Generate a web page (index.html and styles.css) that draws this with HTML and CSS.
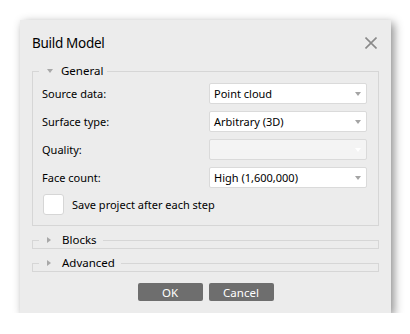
FILE: index.html
```html
<!DOCTYPE html>
<html lang="en">
<head>
    <meta charset="UTF-8">
    <meta name="viewport" content="width=device-width, initial-scale=1.0">
    <title>Build Model</title>
    <link rel="stylesheet" href="styles.css">
</head>
<body>

<div class="dialog">
    <div class="header">
        <h1>Build Model</h1>
        <svg class="close" width="12" height="12" viewBox="0 0 12 12">
            <path d="M0.5 0.5 L11.5 11.5 M11.5 0.5 L0.5 11.5" stroke="#8a8a8a" stroke-width="1.6" fill="none"/>
        </svg>
    </div>

    <fieldset class="group">
        <legend><span class="arrow-down"></span>General</legend>

        <div class="form">
            <label>Source data:</label>
            <div class="combo"><span>Point cloud</span><span class="caret"></span></div>

            <label>Surface type:</label>
            <div class="combo"><span>Arbitrary (3D)</span><span class="caret"></span></div>

            <label>Quality:</label>
            <div class="combo disabled"><span></span><span class="caret"></span></div>

            <label>Face count:</label>
            <div class="combo"><span>High (1,600,000)</span><span class="caret"></span></div>
        </div>

        <div class="check-row">
            <span class="checkbox"></span>
            <span>Save project after each step</span>
        </div>
    </fieldset>

    <fieldset class="group collapsed">
        <legend><span class="arrow-right"></span>Blocks</legend>
    </fieldset>

    <fieldset class="group collapsed">
        <legend><span class="arrow-right"></span>Advanced</legend>
    </fieldset>

    <div class="buttons">
        <button>OK</button>
        <button>Cancel</button>
    </div>
</div>

</body>
</html>
```

FILE: styles.css
```css
* {
    margin: 0;
    padding: 0;
    box-sizing: border-box;
}

body {
    font-family: 'Noto Sans', 'Open Sans', sans-serif;
    font-size: 11px;
    color: #000;
    background-color: #ffffff;
}

.dialog {
    margin: 20px 0 0 20px;
    width: 371px;
    height: 293px;
    background-color: #ececec;
    box-shadow: 3px 3px 9px rgba(0, 0, 0, 0.45);
    padding: 0 12px 0 12px;
}

.header {
    display: flex;
    justify-content: space-between;
    align-items: center;
    height: 43px;
    padding-top: 3px;
    padding-right: 2px;
}

h1 {
    font-size: 13.5px;
    font-weight: normal;
    line-height: 20px;
    letter-spacing: -0.3px;
}

.group {
    border: 1px solid #d6d6d6;
    padding: 4px 11px 10px 9px;
    margin-top: 0;
}

.group legend {
    margin-left: -3px;
    padding: 0 4px 0 8px;
    line-height: 16px;
    font-size: 11.5px;
    display: flex;
    align-items: center;
}

.group.collapsed {
    padding: 0 11px 0 9px;
    margin-top: 6px;
}

.collapsed legend {
    padding-right: 6px;
}

.arrow-down {
    width: 0;
    height: 0;
    border-left: 3.5px solid transparent;
    border-right: 3.5px solid transparent;
    border-top: 4px solid #a8a8a8;
    margin-right: 8px;
}

.arrow-right {
    width: 0;
    height: 0;
    border-top: 3.5px solid transparent;
    border-bottom: 3.5px solid transparent;
    border-left: 4px solid #a8a8a8;
    margin-right: 11px;
}

.form {
    display: grid;
    grid-template-columns: 1fr 158px;
    grid-auto-rows: 21px;
    row-gap: 7px;
    align-items: center;
}

.combo {
    height: 21px;
    background-color: #ffffff;
    border: 1px solid #dadada;
    border-radius: 2px;
    display: flex;
    justify-content: space-between;
    align-items: center;
    padding: 0 5px 0 4px;
}

.combo.disabled {
    background-color: #f4f4f4;
}

.caret {
    width: 0;
    height: 0;
    border-left: 3.5px solid transparent;
    border-right: 3.5px solid transparent;
    border-top: 4px solid #a4a4a4;
}

.disabled .caret {
    border-top-color: #ffffff;
}

.check-row {
    display: flex;
    align-items: center;
    gap: 8px;
    margin-top: 6px;
    padding-left: 1px;
}

.checkbox {
    width: 21px;
    height: 21px;
    background-color: #ffffff;
    border: 1px solid #d6d6d6;
    border-radius: 3px;
}

.buttons {
    display: flex;
    justify-content: center;
    gap: 6px;
    margin-top: 11px;
}

button {
    width: 65px;
    height: 18px;
    background-color: #6e6e6e;
    color: #ffffff;
    border: none;
    border-radius: 2px;
    font-family: 'Noto Sans', 'Open Sans', sans-serif;
    font-size: 11.5px;
}
```
